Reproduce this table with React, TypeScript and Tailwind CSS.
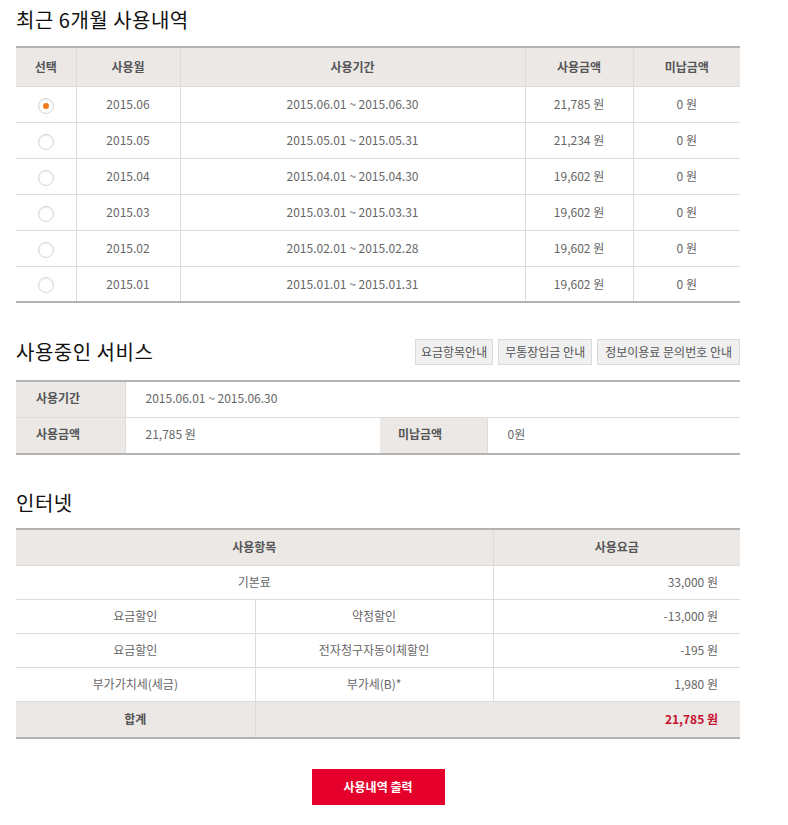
import React from "react";

const F = { fontFamily: '"Noto Sans CJK KR", "Noto Sans", sans-serif' };

const months = [
  ["2015.06", "2015.06.01 ~ 2015.06.30", "21,785 원"],
  ["2015.05", "2015.05.01 ~ 2015.05.31", "21,234 원"],
  ["2015.04", "2015.04.01 ~ 2015.04.30", "19,602 원"],
  ["2015.03", "2015.03.01 ~ 2015.03.31", "19,602 원"],
  ["2015.02", "2015.02.01 ~ 2015.02.28", "19,602 원"],
  ["2015.01", "2015.01.01 ~ 2015.01.31", "19,602 원"],
];

function Radio({ checked }: { checked: boolean }) {
  return (
    <span className="inline-flex w-[16px] h-[16px] rounded-full border border-[#d6d6d6] bg-white items-center justify-center shadow-[inset_0_1px_2px_rgba(0,0,0,0.08)]">
      {checked && <span className="w-[6px] h-[6px] rounded-full bg-[#ee7a1a]" />}
    </span>
  );
}

export default function App() {
  return (
    <div className="bg-white w-[788px] min-h-[825px] pl-[16px] pr-[48px] pt-[6px] text-[#666]" style={F}>
      <h2 className="text-[20px] leading-[28px] text-[#111] font-normal tracking-[0.5px]">최근 6개월 사용내역</h2>
      <table className="mt-[12px] w-[724px] border-collapse table-fixed text-[12px]">
        <colgroup>
          <col className="w-[60px]" />
          <col className="w-[104px]" />
          <col className="w-[345px]" />
          <col className="w-[108px]" />
          <col className="w-[107px]" />
        </colgroup>
        <thead>
          <tr className="h-[39px] bg-[#ebe8e5] border-t-2 border-[#b3b3b3] text-[#555] font-bold">
            <th className="border-r border-[#dcdcdc]">선택</th>
            <th className="border-r border-[#dcdcdc]">사용월</th>
            <th className="border-r border-[#dcdcdc]">사용기간</th>
            <th className="border-r border-[#dcdcdc]">사용금액</th>
            <th>미납금액</th>
          </tr>
        </thead>
        <tbody>
          {months.map((m, i) => (
            <tr key={m[0]} className={`h-[36px] text-center ${i === months.length - 1 ? "border-b-2 border-[#b3b3b3]" : "border-b border-[#dcdcdc]"} border-t border-t-[#dcdcdc]`}>
              <td className="border-r border-[#dcdcdc] align-middle"><div className="flex justify-center pt-[3px]"><Radio checked={i === 0} /></div></td>
              <td className="border-r border-[#dcdcdc]">{m[0]}</td>
              <td className="border-r border-[#dcdcdc]">{m[1]}</td>
              <td className="border-r border-[#dcdcdc]">{m[2]}</td>
              <td>0 원</td>
            </tr>
          ))}
        </tbody>
      </table>

      <div className="mt-[35px] flex items-center justify-between w-[724px]">
        <h2 className="text-[20px] leading-[28px] text-[#111] font-normal tracking-[0.5px]">사용중인 서비스</h2>
        <div className="flex gap-[5px] text-[12px] text-[#555]">
          <button className="h-[26px] px-[5px] bg-[#f0f0f0] border border-[#dadada]">요금항목안내</button>
          <button className="h-[26px] px-[6px] bg-[#f0f0f0] border border-[#dadada]">무통장입금 안내</button>
          <button className="h-[26px] px-[7px] bg-[#f0f0f0] border border-[#dadada]">정보이용료 문의번호 안내</button>
        </div>
      </div>
      <table className="mt-[14px] w-[724px] border-collapse table-fixed text-[12px]">
        <colgroup>
          <col className="w-[109px]" />
          <col className="w-[255px]" />
          <col className="w-[107px]" />
          <col className="w-[253px]" />
        </colgroup>
        <tbody>
          <tr className="h-[36px] border-t-2 border-[#b3b3b3] border-b border-b-[#dcdcdc]">
            <th className="bg-[#ebe8e5] text-left pl-[20px] pb-[3px] font-bold text-[#555] border-r border-[#dcdcdc]">사용기간</th>
            <td colSpan={3} className="pl-[20px] pb-[3px]">2015.06.01 ~ 2015.06.30</td>
          </tr>
          <tr className="h-[37px] border-b-2 border-[#b3b3b3]">
            <th className="bg-[#ebe8e5] text-left pl-[20px] pb-[2px] font-bold text-[#555] border-r border-[#dcdcdc]">사용금액</th>
            <td className="pl-[20px] pb-[2px]">21,785 원</td>
            <th className="bg-[#ebe8e5] text-left pl-[18px] pb-[2px] font-bold text-[#555] border-r border-[#dcdcdc]">미납금액</th>
            <td className="pl-[20px] pb-[2px]">0원</td>
          </tr>
        </tbody>
      </table>

      <h2 className="mt-[34px] text-[20px] leading-[28px] text-[#111] font-normal tracking-[0.5px]">인터넷</h2>
      <table className="mt-[11px] w-[724px] border-collapse table-fixed text-[12px]">
        <colgroup>
          <col className="w-[239px]" />
          <col className="w-[238px]" />
          <col className="w-[247px]" />
        </colgroup>
        <thead>
          <tr className="h-[36px] bg-[#ebe8e5] border-t-2 border-[#b3b3b3] text-[#555] font-bold">
            <th colSpan={2} className="border-r border-[#dcdcdc]">사용항목</th>
            <th>사용요금</th>
          </tr>
        </thead>
        <tbody className="text-center">
          <tr className="h-[34px] border-t border-b border-[#dcdcdc]">
            <td colSpan={2} className="border-r border-[#dcdcdc]">기본료</td>
            <td className="text-right pr-[22px]">33,000 원</td>
          </tr>
          <tr className="h-[34px] border-b border-[#dcdcdc]">
            <td className="border-r border-[#dcdcdc]">요금할인</td>
            <td className="border-r border-[#dcdcdc]">약정할인</td>
            <td className="text-right pr-[22px]">-13,000 원</td>
          </tr>
          <tr className="h-[34px] border-b border-[#dcdcdc]">
            <td className="border-r border-[#dcdcdc]">요금할인</td>
            <td className="border-r border-[#dcdcdc]">전자청구자동이체할인</td>
            <td className="text-right pr-[22px]">-195 원</td>
          </tr>
          <tr className="h-[34px] border-b border-[#dcdcdc]">
            <td className="border-r border-[#dcdcdc]">부가가치세(세금)</td>
            <td className="border-r border-[#dcdcdc]">부가세(B)*</td>
            <td className="text-right pr-[22px]">1,980 원</td>
          </tr>
          <tr className="h-[37px] bg-[#ebe8e5] border-b-2 border-[#b3b3b3]">
            <th className="font-bold text-[#555] border-r border-[#dcdcdc]">합계</th>
            <td colSpan={2} className="text-right pr-[22px] font-bold text-[#c8102e]">21,785 원</td>
          </tr>
        </tbody>
      </table>

      <div className="w-[724px] flex justify-center mt-[30px]">
        <button className="w-[133px] h-[36px] bg-[#e4002b] text-white text-[12px] font-bold">사용내역 출력</button>
      </div>
    </div>
  );
}
